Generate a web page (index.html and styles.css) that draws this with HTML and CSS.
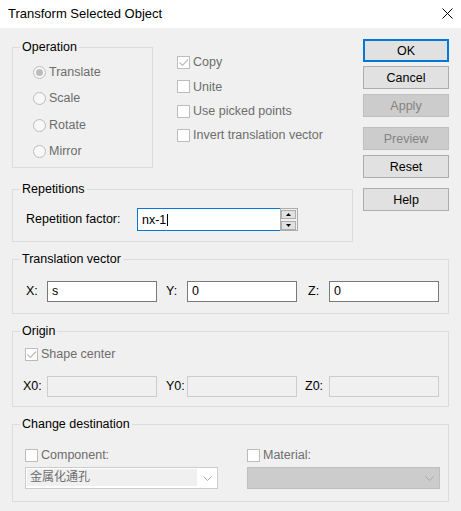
FILE: index.html
```html
<!DOCTYPE html>
<html>
<head>
<meta charset="utf-8">
<link rel="stylesheet" href="styles.css">
</head>
<body>
<div class="titlebar">
  <span class="title">Transform Selected Object</span>
  <svg class="close" width="11" height="11" viewBox="0 0 11 11"><path d="M0.5 0.5 L10.5 10.5 M10.5 0.5 L0.5 10.5" stroke="#000" stroke-width="1" fill="none"/></svg>
</div>
<div class="content">
  <div class="top">
    <div class="left">
      <div class="op-row">
        <fieldset class="group op">
          <legend>Operation</legend>
          <div class="inner">
            <div class="radio disabled"><span class="rb on"></span>Translate</div>
            <div class="radio disabled"><span class="rb"></span>Scale</div>
            <div class="radio disabled"><span class="rb"></span>Rotate</div>
            <div class="radio disabled"><span class="rb"></span>Mirror</div>
          </div>
        </fieldset>
        <div class="checks">
          <div class="check disabled"><span class="cb"><svg width="11" height="11" viewBox="0 0 11 11"><path d="M1.5 5.5 L4.5 8.5 L10 2.5" stroke="#bcbcbc" stroke-width="1.2" fill="none"/></svg></span>Copy</div>
          <div class="check disabled"><span class="cb"></span>Unite</div>
          <div class="check disabled"><span class="cb"></span>Use picked points</div>
          <div class="check disabled"><span class="cb"></span>Invert translation vector</div>
        </div>
      </div>
      <fieldset class="group rep">
        <legend>Repetitions</legend>
        <div class="inner">
          <span class="rep-label">Repetition factor:</span>
          <div class="spin-input">nx-1<span class="caret"></span></div>
          <div class="spinner">
            <span class="spin-btn"><svg width="5" height="3" viewBox="0 0 5 3"><path d="M2.5 0 L5 3 L0 3 Z" fill="#000"/></svg></span>
            <span class="spin-btn"><svg width="5" height="3" viewBox="0 0 5 3"><path d="M0 0 L5 0 L2.5 3 Z" fill="#000"/></svg></span>
          </div>
        </div>
      </fieldset>
    </div>
    <div class="buttons">
      <div class="btn default">OK</div>
      <div class="btn b-cancel">Cancel</div>
      <div class="btn off b-apply">Apply</div>
      <div class="btn off b-preview">Preview</div>
      <div class="btn b-reset">Reset</div>
      <div class="btn b-help">Help</div>
    </div>
  </div>

  <fieldset class="group trans">
    <legend>Translation vector</legend>
    <div class="inner">
      <span class="lbl">X:</span><div class="field">s</div>
      <span class="lbl l-y">Y:</span><div class="field">0</div>
      <span class="lbl l-z">Z:</span><div class="field">0</div>
    </div>
  </fieldset>

  <fieldset class="group origin">
    <legend>Origin</legend>
    <div class="inner">
      <div class="origin-check disabled"><span class="cb"><svg width="11" height="11" viewBox="0 0 11 11"><path d="M1.5 5.5 L4.5 8.5 L10 2.5" stroke="#bcbcbc" stroke-width="1.2" fill="none"/></svg></span>Shape center</div>
      <div class="coord-row">
        <span class="lbl l-x0">X0:</span><div class="field off"></div>
        <span class="lbl l-y0">Y0:</span><div class="field off"></div>
        <span class="lbl l-z0">Z0:</span><div class="field off"></div>
      </div>
    </div>
  </fieldset>

  <fieldset class="group dest">
    <legend>Change destination</legend>
    <div class="inner">
      <div class="dcol">
        <div class="dcheck disabled"><span class="cb"></span>Component:</div>
        <div class="combo">
          <span class="combo-text">金属化通孔</span>
          <span class="combo-arrow"><svg width="9" height="5" viewBox="0 0 9 5"><path d="M0.5 0.5 L4.5 4.5 L8.5 0.5" stroke="#a8a8a8" stroke-width="1" fill="none"/></svg></span>
        </div>
      </div>
      <div class="dcol">
        <div class="dcheck disabled"><span class="cb"></span>Material:</div>
        <div class="combo off">
          <span class="combo-text"></span>
          <span class="combo-arrow"><svg width="9" height="5" viewBox="0 0 9 5"><path d="M0.5 0.5 L4.5 4.5 L8.5 0.5" stroke="#a8a8a8" stroke-width="1" fill="none"/></svg></span>
        </div>
      </div>
    </div>
  </fieldset>
</div>
</body>
</html>
```
FILE: styles.css
```css
* { box-sizing: border-box; }
html, body { margin: 0; padding: 0; }
body {
  width: 461px;
  height: 511px;
  overflow: hidden;
  background: #f0f0f0;
  font-family: "Liberation Sans", Arial, sans-serif;
  font-size: 12.5px;
  color: #000;
}
.titlebar {
  height: 28px;
  background: #fff;
  display: flex;
  align-items: center;
  justify-content: space-between;
  padding: 0 8px 2px 8px;
}
.title { font-size: 13px; }
.close { display: block; }

.content { padding: 11px 12px 0 12px; }
.top { display: flex; gap: 10px; }
.left { width: 341px; margin-top: 1px; }
.op-row { display: flex; }

fieldset.group {
  margin: 0;
  padding: 0;
  border: 1px solid #dcdcdc;
  min-width: 0;
}
legend {
  margin-left: 7px;
  padding: 0 2px;
  height: 14px;
  line-height: 14px;
}
.disabled { color: #6d6d6d; }

fieldset.op { width: 141px; }
.op .inner { height: 113px; padding: 5px 0 0 20px; }
.radio { height: 26px; display: flex; align-items: center; }
.radio:nth-child(3) { margin-top: 1px; }
.rb {
  width: 13px; height: 13px;
  border: 1px solid #bcbcbc;
  border-radius: 50%;
  background: #f7f7f7;
  margin-right: 3px;
  display: flex; align-items: center; justify-content: center;
  flex: none;
}
.rb.on::after {
  content: "";
  width: 7px; height: 7px;
  border-radius: 50%;
  background: #bcbcbc;
}

.checks { margin-left: 24px; padding-top: 10px; }
.check { height: 24px; display: flex; align-items: center; }
.check:nth-child(2) { height: 25px; }
.cb {
  width: 13px; height: 13px;
  border: 1px solid #bcbcbc;
  background: #fff;
  margin-right: 3px;
  flex: none;
  display: block;
}
.cb svg { display: block; }

fieldset.rep { margin-top: 14px; }
.rep .inner { height: 45px; padding: 12px 0 0 13px; display: flex; align-items: flex-start; }
.rep-label { width: 111px; height: 23px; line-height: 23px; }
.spin-input {
  width: 143px; height: 23px;
  border: 1px solid #0078d7;
  border-right: 0;
  background: #fff;
  padding-left: 4px;
  display: flex; align-items: center;
}
.caret { width: 1px; height: 12px; background: #000; margin-left: 1px; }
.spinner {
  width: 18px; height: 23px;
  border: 1px solid #adadad;
  background: #f0f0f0;
  padding: 1px 1px 0 0;
  display: flex; flex-direction: column; gap: 2px;
}
.spin-btn {
  height: 9px;
  border: 1px solid #adadad;
  background: #e1e1e1;
  display: flex; align-items: center; justify-content: center;
}
.spin-btn svg { display: block; }

.buttons { width: 86px; display: flex; flex-direction: column; }
.btn {
  height: 23px;
  border: 1px solid #adadad;
  background: #e1e1e1;
  display: flex; align-items: center; justify-content: center;
}
.btn.default { border: 2px solid #0078d7; }
.btn.off { background: #cccccc; border-color: #bfbfbf; color: #838383; }
.b-cancel { margin-top: 4px; }
.b-apply { margin-top: 5px; }
.b-preview { margin-top: 10px; }
.b-reset { margin-top: 5px; }
.b-help { margin-top: 10px; }

fieldset.trans { margin-top: 10px; }
.trans .inner { height: 47px; padding: 15px 0 0 13px; display: flex; }
.lbl { width: 21px; height: 21px; line-height: 21px; flex: none; }
.l-y { margin-left: 9px; }
.l-z { margin-left: 11px; }
.field {
  width: 110px; height: 21px;
  border: 1px solid #7a7a7a;
  background: #fff;
  padding-left: 4px;
  line-height: 19px;
  flex: none;
}
.field.off { border-color: #cccccc; background: #f0f0f0; }

fieldset.origin { margin-top: 10px; }
.origin .inner { height: 68px; padding-top: 8px; }
.origin-check { height: 16px; display: flex; align-items: center; padding-left: 12px; }
.coord-row { display: flex; margin-top: 14px; padding-left: 10px; }
.l-x0 { width: 24px; }
.l-y0 { margin-left: 9px; }
.l-z0 { margin-left: 8px; width: 24px; }

fieldset.dest { margin-top: 10px; }
.dest .inner { height: 70px; padding: 16px 0 0 12px; display: flex; gap: 29px; }
.dcol { width: 193px; }
.dcheck { height: 16px; display: flex; align-items: center; }
.combo {
  margin-top: 4px;
  height: 22px;
  border: 1px solid #cccccc;
  background: #fff;
  display: flex;
}
.combo-text {
  flex: 1;
  margin: 1px 0 2px 1px;
  background: #f0f0f0;
  padding-left: 3px;
  line-height: 17px;
  color: #6d6d6d;
  font-family: "Liberation Sans", "Noto Sans CJK SC", sans-serif;
  font-size: 12px;
}
.combo-arrow { width: 20px; display: flex; align-items: center; justify-content: center; }
.combo-arrow svg { display: block; }
.combo.off { background: #cccccc; border-color: #bfbfbf; }
.combo.off .combo-text { background: transparent; }
```
